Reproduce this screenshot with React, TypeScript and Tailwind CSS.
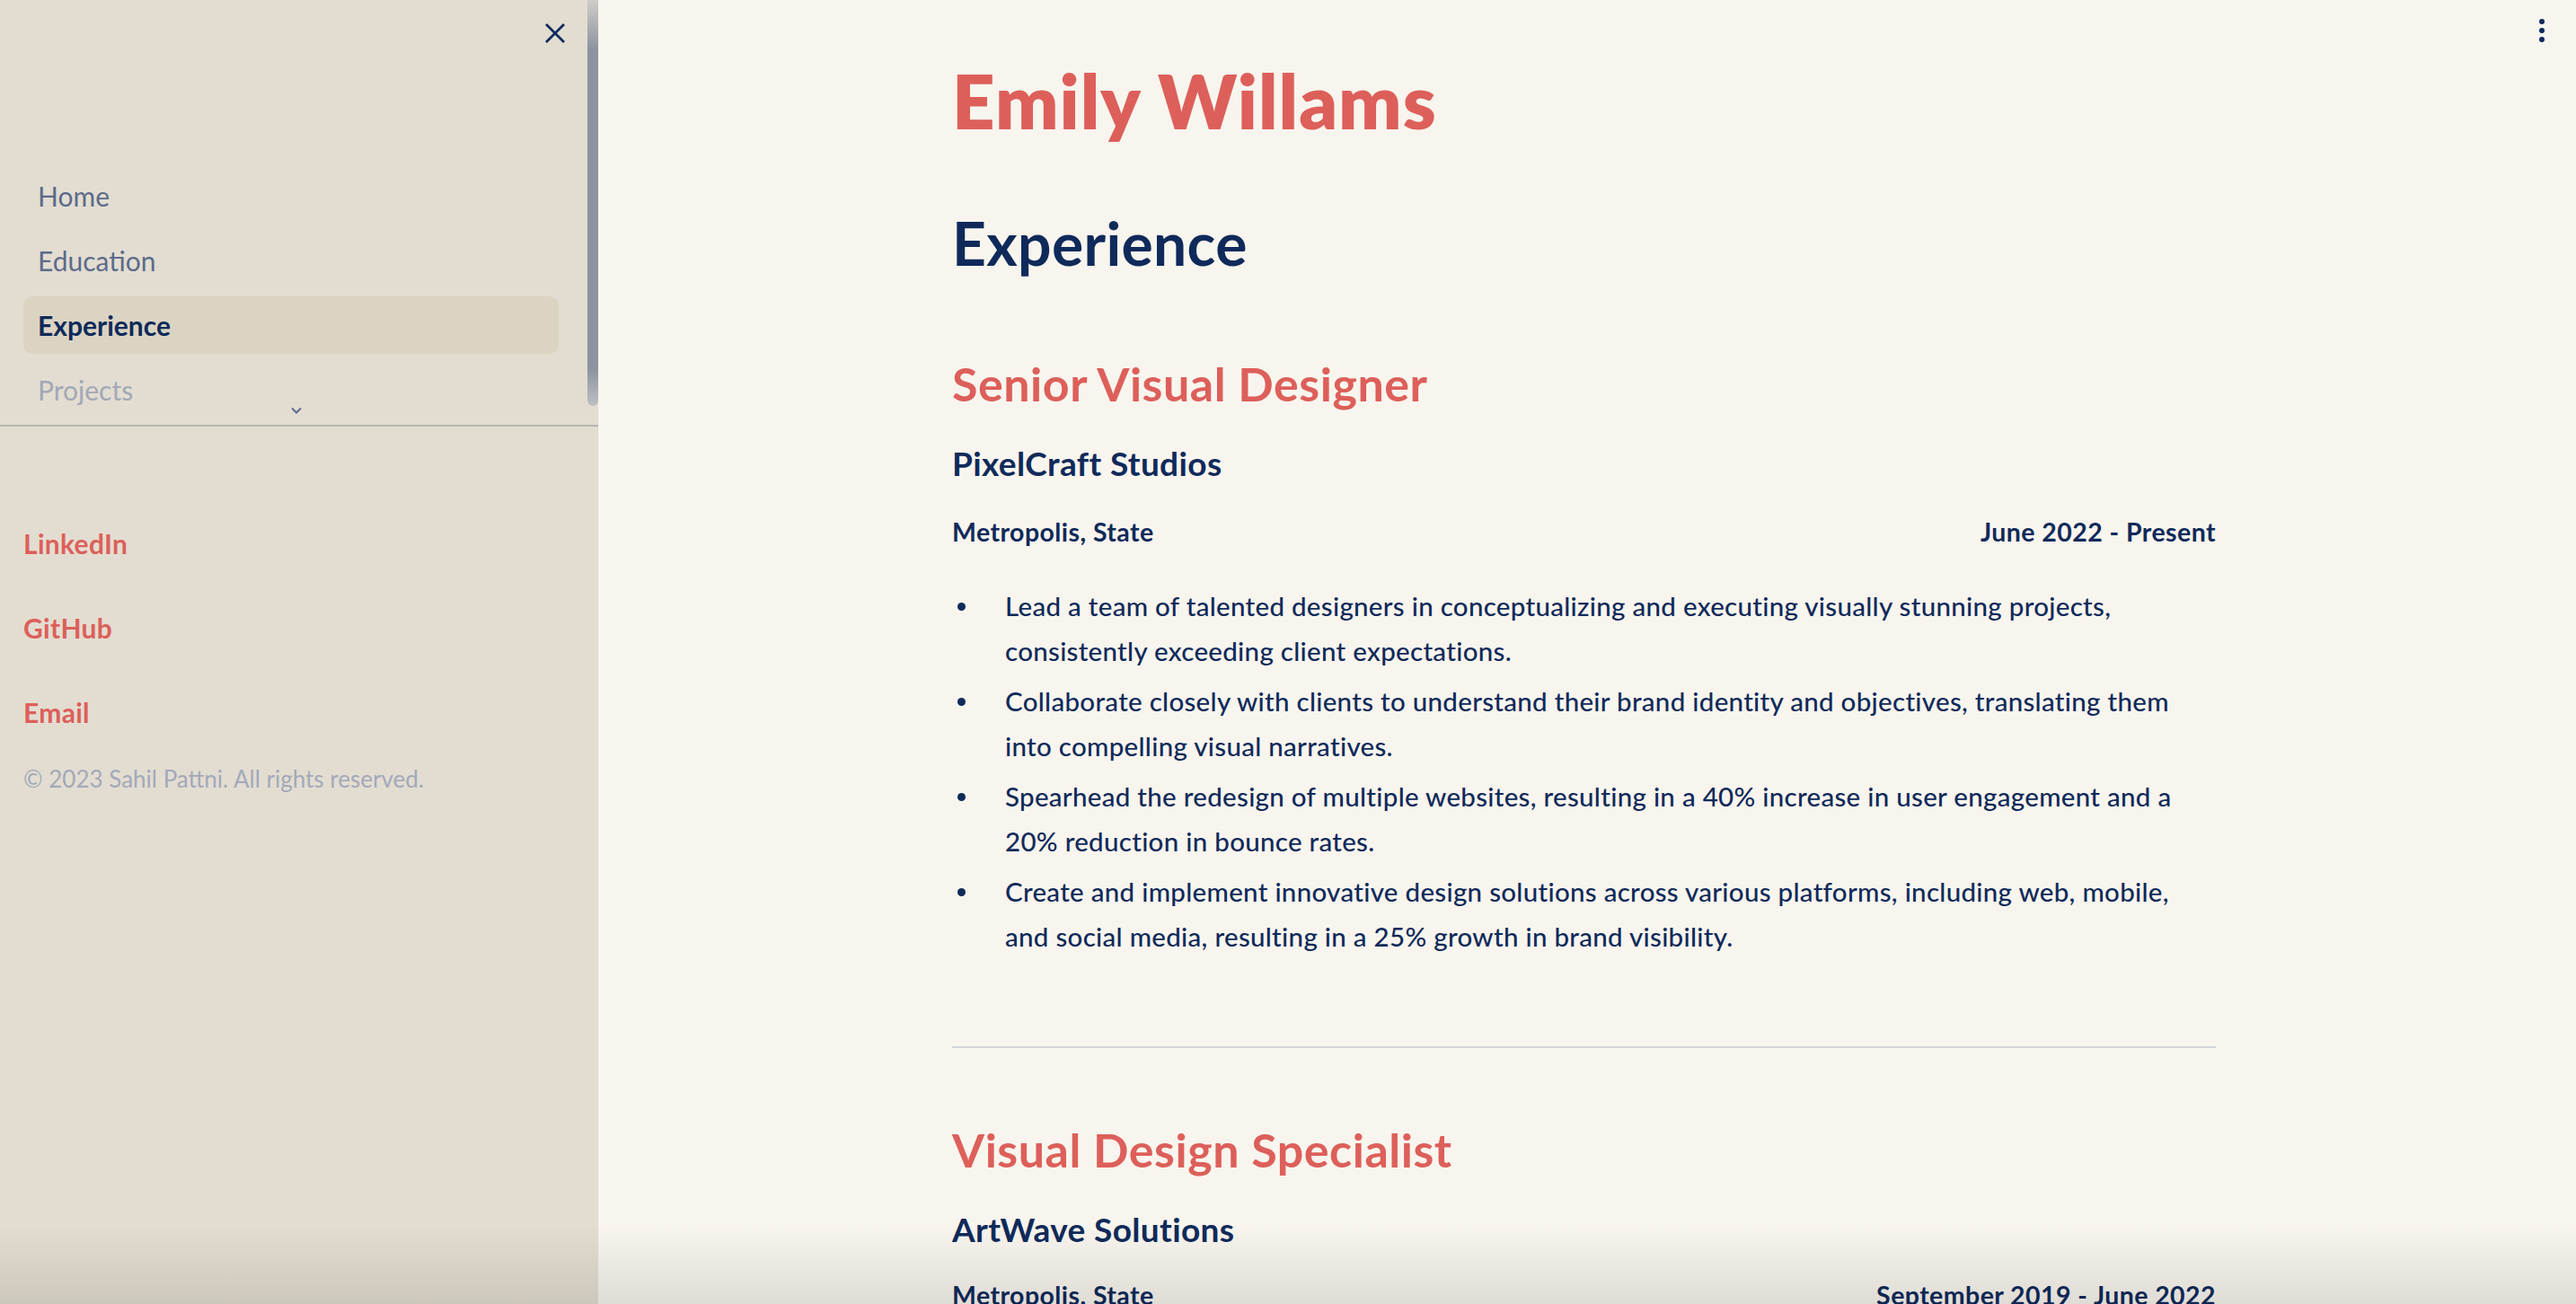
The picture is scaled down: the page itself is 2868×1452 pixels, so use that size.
import { Fragment } from "react";

const navItems = [
  { label: "Home", state: "idle" },
  { label: "Education", state: "idle" },
  { label: "Experience", state: "active" },
  { label: "Projects", state: "faded" },
];

const socials = ["LinkedIn", "GitHub", "Email"];

const jobs = [
  {
    title: "Senior Visual Designer",
    company: "PixelCraft Studios",
    place: "Metropolis, State",
    dates: "June 2022 - Present",
    points: [
      [
        "Lead a team of talented designers in conceptualizing and executing visually stunning projects,",
        "consistently exceeding client expectations.",
      ],
      [
        "Collaborate closely with clients to understand their brand identity and objectives, translating them",
        "into compelling visual narratives.",
      ],
      [
        "Spearhead the redesign of multiple websites, resulting in a 40% increase in user engagement and a",
        "20% reduction in bounce rates.",
      ],
      [
        "Create and implement innovative design solutions across various platforms, including web, mobile,",
        "and social media, resulting in a 25% growth in brand visibility.",
      ],
    ],
  },
  {
    title: "Visual Design Specialist",
    company: "ArtWave Solutions",
    place: "Metropolis, State",
    dates: "September 2019 - June 2022",
    points: [],
  },
];

function Sidebar() {
  return (
    <aside className="relative flex w-[666px] shrink-0 flex-col bg-[#e3ddd1]">
      <div className="relative h-[473px] shrink-0">
        <button className="absolute left-[606px] top-[25px] text-[#0f2a5a]">
          <svg width="24" height="24" viewBox="0 0 24 24" fill="none">
            <path d="M2 2 22 22M22 2 2 22" stroke="currentColor" strokeWidth="2.8" />
          </svg>
        </button>

        <nav className="flex flex-col gap-2 pl-[26px] pr-[44px] pt-[186px]">
          {navItems.map((item) => (
            <div
              key={item.label}
              className={
                item.state === "active"
                  ? "h-[64px] rounded-[10px] bg-[#dbd4c3] px-4 text-[30px] leading-[64px] font-bold text-[#0f2a5a]"
                  : item.state === "faded"
                    ? "h-[64px] rounded-[10px] px-4 text-[30px] leading-[64px] text-[#a1a8b7]"
                    : "h-[64px] rounded-[10px] px-4 text-[30px] leading-[64px] text-[#5c6b8b]"
              }
            >
              {item.label}
            </div>
          ))}
        </nav>

        <svg
          className="absolute left-[324px] top-[453px] text-[#5c6b8b]"
          width="12"
          height="8"
          viewBox="0 0 12 8"
          fill="none"
        >
          <path d="M1 1.5 6 6.5 11 1.5" stroke="currentColor" strokeWidth="2" />
        </svg>

        <div className="absolute left-[654px] top-0 h-[452px] w-[12px] rounded-b-full bg-[linear-gradient(to_bottom,#cfcdc7_0px,#8c93a0_55px,#8c93a0_410px,#bcbfc3_452px)]" />
      </div>

      <div className="h-[2px] bg-[#b8b6b0]" />

      <div className="flex flex-col px-[26px] pt-[110px]">
        {socials.map((s, i) => (
          <a
            key={s}
            href="#"
            className={
              i === 0
                ? "text-[30px] leading-[40px] font-bold tracking-[0.01em] text-[#dd5f5a]"
                : "mt-[54px] text-[30px] leading-[40px] font-bold tracking-[0.01em] text-[#dd5f5a]"
            }
          >
            {s}
          </a>
        ))}
        <p className="mt-[36px] text-[26px] leading-[36px] text-[#a2a9ba]">
          © 2023 Sahil Pattni. All rights reserved.
        </p>
      </div>
    </aside>
  );
}

function Job({ job, first }: { job: (typeof jobs)[number]; first: boolean }) {
  return (
    <section>
      <h3
        className={
          (first ? "mt-[84px]" : "mt-[81px]") +
          " text-[52px] leading-[64px] font-bold tracking-[0.01em] text-[#dd5f5a]"
        }
      >
        {job.title}
      </h3>
      <h4 className="mt-[33px] text-[37px] leading-[48px] font-bold tracking-[0.01em] text-[#0f2a5a]">
        {job.company}
      </h4>
      <div
        className={
          (first ? "mt-[32px]" : "mt-[29px]") +
          " flex justify-between text-[28.5px] leading-[40px] font-bold tracking-[0.015em] text-[#0f2a5a]"
        }
      >
        <span>{job.place}</span>
        <span>{job.dates}</span>
      </div>
      {job.points.length > 0 && (
        <ul className="mt-[38px] flex flex-col gap-[6px]">
          {job.points.map((lines) => (
            <li
              key={lines[0]}
              className="flex items-start text-[29.5px] leading-[50px] font-medium tracking-[0.01em] text-[#0f2a5a]"
            >
              <span className="ml-[6px] mr-[44px] mt-[21px] h-[9px] w-[9px] shrink-0 rounded-full bg-[#0f2a5a]" />
              <span className="whitespace-nowrap">
                {lines.map((l, i) => (
                  <Fragment key={i}>
                    {i > 0 && <br />}
                    {l}
                  </Fragment>
                ))}
              </span>
            </li>
          ))}
        </ul>
      )}
      {first && <hr className="mt-[97px] h-[2px] border-0 bg-[#d2d4d4]" />}
    </section>
  );
}

export default function App() {
  return (
    <div className="relative flex h-[1452px] w-full overflow-hidden bg-[#f8f5ee] font-['Lato','Open_Sans',sans-serif]">
      <Sidebar />

      <main className="relative flex-1">
        <div className="absolute right-[35px] top-[21px] flex flex-col gap-[4px]">
          <span className="h-[6px] w-[6px] rounded-full bg-[#0f2a5a]" />
          <span className="h-[6px] w-[6px] rounded-full bg-[#0f2a5a]" />
          <span className="h-[6px] w-[6px] rounded-full bg-[#0f2a5a]" />
        </div>

        <div className="ml-[394px] w-[1407px] pt-[64px]">
          <h1 className="text-[83px] leading-[96px] font-extrabold tracking-[0.012em] text-[#dd5f5a]">
            Emily Willams
          </h1>
          <h2 className="mt-[71px] text-[66px] leading-[80px] font-bold tracking-[0.005em] text-[#0f2a5a]">
            Experience
          </h2>
          {jobs.map((job, i) => (
            <Job key={job.title} job={job} first={i === 0} />
          ))}
        </div>
      </main>

      <div className="pointer-events-none absolute inset-x-0 bottom-0 h-[90px] bg-linear-to-b from-transparent to-black/[0.1]" />
    </div>
  );
}
